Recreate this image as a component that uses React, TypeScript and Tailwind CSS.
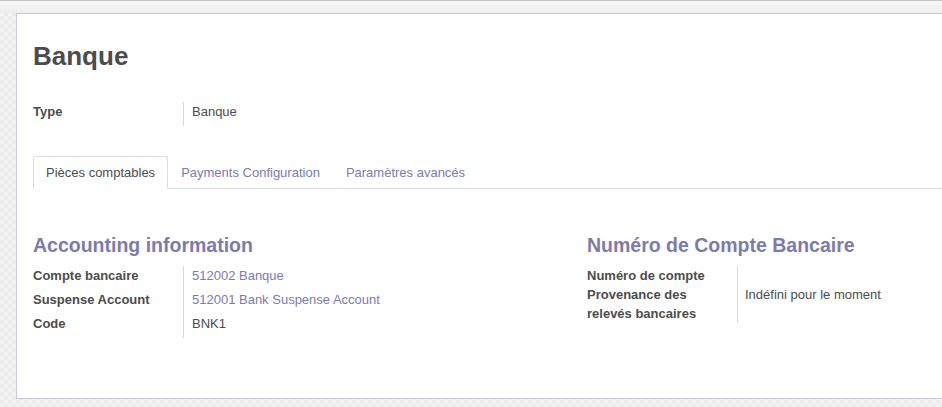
import React from "react";

const Row = ({ label, value, link }: { label: string; value: string; link?: boolean }) => (
  <div className="flex h-[24px]">
    <div className="w-[150px] shrink-0 leading-[20px] font-bold">{label}</div>
    <div className={`border-l border-[#d9d9d9] pl-[8px] leading-[20px] ${link ? "text-[#7c7bad]" : ""}`}>
      {value}
    </div>
  </div>
);

export default function App() {
  return (
    <div
      className="w-[942px] h-[407px] overflow-hidden text-[13px] text-[#4c4c4c] bg-[repeating-conic-gradient(#f3f3f3_0_25%,#ebebeb_0_50%)] bg-[length:8px_8px]"
      style={{ fontFamily: '"Liberation Sans", Arial, sans-serif' }}
    >
      <div className="h-[13px] border-t border-[#c4c4c4] bg-gradient-to-b from-[#f6f6f6] to-[#eeeeee]" />
      <div className="ml-[16px] h-[386px] border-l border-t border-b border-[#c9c7d9] bg-white pl-[16px] pt-[27px]">
        <h1 className="h-[30px] text-[26px] leading-[30px] font-bold">Banque</h1>

        <div className="mt-[31px] flex h-[24px]">
          <div className="w-[150px] leading-[20px] font-bold">Type</div>
          <div className="border-l border-[#d9d9d9] pl-[8px] leading-[20px]">Banque</div>
        </div>

        <div className="mt-[30px] flex border-b border-[#dcdbe6]">
          <div className="-mb-px rounded-t-[3px] border border-[#dcdbe6] border-b-white bg-white px-[12px] py-[6px] leading-[19px]">
            Pièces comptables
          </div>
          <div className="-mb-px border border-transparent px-[12px] py-[6px] leading-[19px] text-[#7c7bad]">
            Payments Configuration
          </div>
          <div className="-mb-px border border-transparent px-[12px] py-[6px] leading-[19px] text-[#7c7bad]">
            Paramètres avancés
          </div>
        </div>

        <div className="flex pt-[44px]">
          <div className="w-[554px] shrink-0">
            <h2 className="text-[19.5px] leading-[24px] font-bold text-[#7c7bad]">Accounting information</h2>
            <div className="mt-[9px]">
              <Row label="Compte bancaire" value="512002 Banque" link />
              <Row label="Suspense Account" value="512001 Bank Suspense Account" link />
              <Row label="Code" value="BNK1" />
            </div>
          </div>
          <div className="flex-1">
            <h2 className="text-[19.5px] leading-[24px] font-bold text-[#7c7bad] whitespace-nowrap">
              Numéro de Compte Bancaire
            </h2>
            <div className="mt-[9px]">
              <div className="flex">
                <div className="w-[150px] shrink-0 h-[19px] pt-[1px] leading-[18px] font-bold whitespace-nowrap">
                  Numéro de compte
                </div>
                <div className="border-l border-[#d9d9d9] pl-[7px]" />
              </div>
              <div className="flex">
                <div className="w-[150px] shrink-0 pr-[15px] leading-[19px] font-bold">
                  Provenance des relevés bancaires
                </div>
                <div className="border-l border-[#d9d9d9] pl-[7px] leading-[19px]">Indéfini pour le moment</div>
              </div>
            </div>
          </div>
        </div>
      </div>
    </div>
  );
}
